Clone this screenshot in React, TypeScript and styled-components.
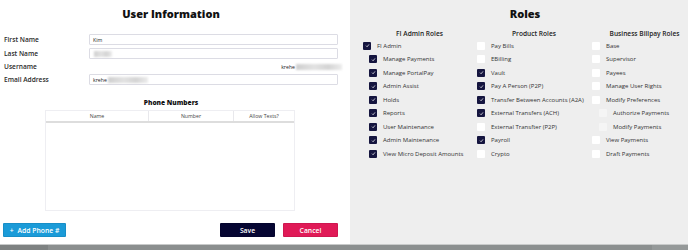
import styled, { createGlobalStyle } from 'styled-components';

const GlobalStyle = createGlobalStyle`
  * { box-sizing: border-box; }
  body {
    margin: 0;
    font-family: "Open Sans", "Liberation Sans", sans-serif;
    color: #222;
  }
`;

const Page = styled.div`
  width: 688px;
  height: 250px;
  display: flex;
  flex-direction: column;
  overflow: hidden;
`;

const Main = styled.div`
  flex: 1;
  display: flex;
`;

const LeftPanel = styled.section`
  width: 350px;
  background: #ffffff;
  padding: 0 12px 0 4px;
  display: flex;
  flex-direction: column;
`;

const RightPanel = styled.section`
  flex: 1;
  background: #eeeeee;
  padding: 0 0 0 12px;
`;

const Title = styled.h1`
  margin: 0;
  height: 30px;
  padding-top: 6px;
  font-size: 11px;
  font-weight: 800;
  color: #111;
  text-align: center;
`;

const FormGrid = styled.div`
  display: grid;
  grid-template-columns: 85px 1fr;
  row-gap: 3px;
  align-items: center;
  margin-top: 4px;
`;

const Label = styled.label`
  font-size: 6.6px;
  font-weight: 600;
  color: #2a2a2a;
`;

const Field = styled.div`
  height: 11px;
  border: 1px solid #dcdce4;
  border-radius: 1px;
  font-size: 5.2px;
  color: #222;
  padding-left: 3px;
  display: flex;
  align-items: center;
`;

const StaticValue = styled.div`
  height: 9px;
  font-size: 5.2px;
  color: #222;
  display: flex;
  align-items: center;
  justify-content: flex-end;
  margin-right: -4px;
`;

const Blur = styled.span<{ w: number }>`
  display: inline-block;
  width: ${(p) => p.w}px;
  height: 6px;
  background: linear-gradient(90deg, #cfcfcf, #e2e2e2 40%, #d4d4d4 70%, #ececec);
  filter: blur(1px);
  margin-left: 1px;
`;

const SubTitle = styled.h2`
  margin: 13px 0 3px;
  font-size: 6.6px;
  font-weight: 800;
  text-align: center;
  color: #111;
`;

const Table = styled.div`
  margin-left: 41px;
  width: 250px;
  height: 101px;
  border: 1px solid #eeeef2;
  display: flex;
  flex-direction: column;
`;

const HeadRow = styled.div`
  display: grid;
  grid-template-columns: 102px 85px 1fr;
  height: 12px;
  border-bottom: 2px solid #dddddd;
`;

const HeadCell = styled.div`
  font-size: 5.2px;
  color: #444;
  display: flex;
  align-items: center;
  justify-content: center;
  & + & { border-left: 1px solid #e8e8ec; }
`;

const Footer = styled.div`
  margin-top: auto;
  margin-bottom: 7px;
  display: flex;
  align-items: center;
  margin-left: -1px;
`;

const Button = styled.button<{ tone: 'blue' | 'navy' | 'red' }>`
  height: 14px;
  border: 1px solid rgba(0, 0, 0, 0.08);
  border-radius: 1px;
  color: #fff;
  font-family: inherit;
  font-size: 6.8px;
  font-weight: 600;
  padding: 0;
  display: flex;
  align-items: center;
  justify-content: center;
  background: ${(p) => (p.tone === 'blue' ? '#1b9bd8' : p.tone === 'navy' ? '#060632' : '#e01a57')};
`;

const AddButton = styled(Button)`
  width: 63px;
  gap: 4px;
`;

const Spacer = styled.div`
  flex: 1;
`;

const ActionButton = styled(Button)`
  width: 55px;
  & + & { margin-left: 8px; }
`;

const RolesGrid = styled.div`
  display: grid;
  grid-template-columns: 115px 114px 1fr;
`;

const Column = styled.div`
  display: flex;
  flex-direction: column;
`;

const ColumnTitle = styled.h3<{ shift: number }>`
  margin: 0 0 1px;
  padding-left: ${(p) => p.shift}px;
  font-size: 6.6px;
  font-weight: 600;
  color: #222;
  text-align: center;
  height: 8px;
  line-height: 8px;
`;

const Row = styled.div<{ indent: number }>`
  height: 13.5px;
  display: flex;
  align-items: center;
  padding-left: ${(p) => p.indent}px;
  gap: 6px;
`;

const Box = styled.span<{ checked: boolean; muted: boolean }>`
  width: 8px;
  height: 8px;
  flex: none;
  border-radius: 1px;
  background: ${(p) => (p.checked ? '#15153f' : p.muted ? '#f5f5f5' : '#ffffff')};
  display: flex;
  align-items: center;
  justify-content: center;
`;

const RowLabel = styled.span`
  font-size: 6px;
  color: #333;
  white-space: nowrap;
`;

const BottomBar = styled.div`
  height: 6px;
  border-top: 1px solid #c8caca;
  background: linear-gradient(90deg, #7e8282 0, #7e8282 48px, #8b8f8f 48px, #8b8f8f 652px, #959999 652px);
`;

const Check = () => (
  <svg width="5" height="5" viewBox="0 0 10 10">
    <path d="M2 5.3 L4.2 7.5 L8 2.8" fill="none" stroke="#fff" strokeWidth="1.4" />
  </svg>
);

type Role = { label: string; checked?: boolean; indent: number; muted?: boolean };

const fiAdmin: Role[] = [
  { label: 'FI Admin', checked: true, indent: 1 },
  { label: 'Manage Payments', checked: true, indent: 7 },
  { label: 'Manage PortalPay', checked: true, indent: 7 },
  { label: 'Admin Assist', checked: true, indent: 7 },
  { label: 'Holds', checked: true, indent: 7 },
  { label: 'Reports', checked: true, indent: 7 },
  { label: 'User Maintenance', checked: true, indent: 7 },
  { label: 'Admin Maintenance', checked: true, indent: 7 },
  { label: 'View Micro Deposit Amounts', checked: true, indent: 7 },
];

const product: Role[] = [
  { label: 'Pay Bills', indent: 0 },
  { label: 'EBilling', indent: 0 },
  { label: 'Vault', checked: true, indent: 0 },
  { label: 'Pay A Person (P2P)', checked: true, indent: 0 },
  { label: 'Transfer Between Accounts (A2A)', checked: true, indent: 0 },
  { label: 'External Transfers (ACH)', checked: true, indent: 0 },
  { label: 'External Transfter (P2P)', indent: 0 },
  { label: 'Payroll', checked: true, indent: 0 },
  { label: 'Crypto', indent: 0 },
];

const billpay: Role[] = [
  { label: 'Base', indent: 1 },
  { label: 'Supervisor', indent: 1 },
  { label: 'Payees', indent: 1 },
  { label: 'Manage User Rights', indent: 1 },
  { label: 'Modify Preferences', indent: 1 },
  { label: 'Authorize Payments', indent: 8, muted: true },
  { label: 'Modify Payments', indent: 8, muted: true },
  { label: 'View Payments', indent: 1 },
  { label: 'Draft Payments', indent: 1 },
];

const RoleColumn = ({ title, roles, shift = 0 }: { title: string; roles: Role[]; shift?: number }) => (
  <Column>
    <ColumnTitle shift={shift}>{title}</ColumnTitle>
    {roles.map((r) => (
      <Row key={r.label} indent={r.indent}>
        <Box checked={!!r.checked} muted={!!r.muted}>{r.checked && <Check />}</Box>
        <RowLabel>{r.label}</RowLabel>
      </Row>
    ))}
  </Column>
);

export default function App() {
  return (
    <Page>
      <GlobalStyle />
      <Main>
        <LeftPanel>
          <Title>User Information</Title>
          <FormGrid>
            <Label>First Name</Label>
            <Field>Kim</Field>
            <Label>Last Name</Label>
            <Field><Blur w={18} /></Field>
            <Label>Username</Label>
            <StaticValue>krehe<Blur w={46} /></StaticValue>
            <Label>Email Address</Label>
            <Field>krehe<Blur w={40} /></Field>
          </FormGrid>
          <SubTitle>Phone Numbers</SubTitle>
          <Table>
            <HeadRow>
              <HeadCell>Name</HeadCell>
              <HeadCell>Number</HeadCell>
              <HeadCell>Allow Texts?</HeadCell>
            </HeadRow>
          </Table>
          <Footer>
            <AddButton tone="blue"><span>+</span>Add Phone #</AddButton>
            <Spacer />
            <ActionButton tone="navy">Save</ActionButton>
            <ActionButton tone="red">Cancel</ActionButton>
          </Footer>
        </LeftPanel>
        <RightPanel>
          <Title>Roles</Title>
          <RolesGrid>
            <RoleColumn title="FI Admin Roles" roles={fiAdmin} shift={-4} />
            <RoleColumn title="Product Roles" roles={product} />
            <RoleColumn title="Business Billpay Roles" roles={billpay} shift={10} />
          </RolesGrid>
        </RightPanel>
      </Main>
      <BottomBar />
    </Page>
  );
}
